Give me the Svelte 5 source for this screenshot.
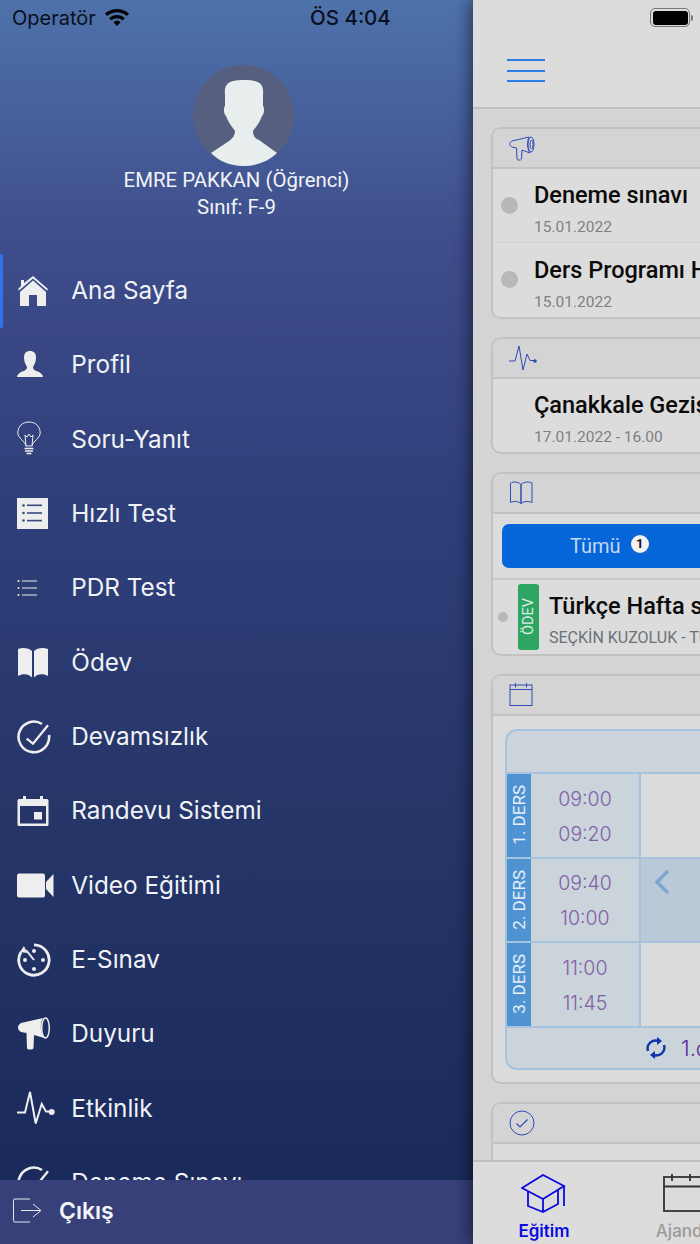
<script>
  const menu = [
    { key: 'home', label: 'Ana Sayfa', active: true },
    { key: 'user', label: 'Profil' },
    { key: 'bulb', label: 'Soru-Yanıt' },
    { key: 'list', label: 'Hızlı Test' },
    { key: 'pdr', label: 'PDR Test' },
    { key: 'book', label: 'Ödev' },
    { key: 'check', label: 'Devamsızlık' },
    { key: 'cal', label: 'Randevu Sistemi' },
    { key: 'video', label: 'Video Eğitimi' },
    { key: 'exam', label: 'E-Sınav' },
    { key: 'mega', label: 'Duyuru' },
    { key: 'pulse', label: 'Etkinlik' },
    { key: 'check', label: 'Deneme Sınavı' }
  ];
  const lessons = [
    { name: '1. DERS', a: '09:00', b: '09:20', hi: false },
    { name: '2. DERS', a: '09:40', b: '10:00', hi: true },
    { name: '3. DERS', a: '11:00', b: '11:45', hi: false }
  ];
</script>

<div class="screen">
  <aside class="side">
    <div class="status">
      <span class="op">Operatör</span>
      <svg class="wifi" width="26" height="20" viewBox="0 0 26 20">
        <path d="M1 6.500C8 .5 18 .5 25 6.500l-2.200 2.400C17 4 9 4 3.200 8.900Z" />
        <path d="M5.200 11C9.800 7 16.200 7 20.800 11l-2.200 2.400C15.200 10.500 10.800 10.500 7.400 13.400Z" />
        <path d="M9.500 15.200c2.200-1.800 4.800-1.800 7 0L13 19Z" />
      </svg>
      <span class="time">ÖS 4:04</span>
    </div>
    <div class="profile">
      <svg class="avatar" width="101" height="101" viewBox="0 0 101 101">
        <circle cx="50.500" cy="50.500" r="50.500" fill="#565f80" />
        <path d="M32 30C31 19 35 15 51 15C67 15 71 19 70 30L70 41C72 43 71 50 69 51C67 57 63 62 60 66C60 70 61 73 66 75L84 88C76 96 64 101 50 101C37 101 26 96 18 88L36 76C40 73 42 70 42 66C39 62 35 57 33 51C31 50 30 43 32 41Z" fill="#e8eded" />
      </svg>
      <div class="pname">EMRE PAKKAN (Öğrenci)</div>
      <div class="pclass">Sınıf: F-9</div>
    </div>
    <nav class="menu">
      {#each menu as m}
        <div class="item" class:active={m.active}>
          <span class="mi">
            {#if m.key === 'home'}
              <svg width="32" height="32" viewBox="0 0 32 32" fill="#eeeeee"><path d="M1 14 4 11V5H7V8L16 1 31 14 30 15.500 16 3.500 2 15.500Z" /><path d="M3 17 16 5.500 29 17V31H20V20H12V31H3Z" /></svg>
            {:else if m.key === 'user'}
              <svg width="32" height="30" viewBox="0 0 32 30" fill="#eeeeee"><path d="M7 8C7 3 9 1 13 1C17 1 19 3 19 8C19 12 17 15 16 17C16 20 19 21 22 22C24 23 26 25 26 27H0C0 25 2 23 4 22C7 21 10 20 10 17C9 15 7 12 7 8Z" /></svg>
            {:else if m.key === 'bulb'}
              <svg width="32" height="36" viewBox="0 0 32 36" fill="none" stroke="#eeeeee" stroke-width="1"><path d="M9 25C8 20 .8 17 .8 12C.8 5 6 1 12 1C18 1 23.200 5 23.200 12C23.200 17 16 20 15 25Z" /><path d="M9 25 8 14 10 16 12 13 14 16 16 14 15 25" /><path d="M7.500 27.500H16.500M8 30H16M9.500 32.500H14.500" stroke-width="1.500" /></svg>
            {:else if m.key === 'list'}
              <svg width="31" height="31" viewBox="0 0 31 31"><rect width="31" height="31" fill="#eeeeee" /><g fill="#3a4a7c"><circle cx="6.500" cy="7.500" r="1.300" /><circle cx="6.500" cy="15" r="1.300" /><circle cx="6.500" cy="22.500" r="1.300" /><rect x="10" y="6.500" width="15" height="1.600" /><rect x="10" y="14.200" width="15" height="1.600" /><rect x="10" y="21.800" width="15" height="1.600" /></g></svg>
            {:else if m.key === 'pdr'}
              <svg width="22" height="18" viewBox="0 0 22 18" fill="#eeeeee"><circle cx="1.500" cy="2" r="1" /><circle cx="1.500" cy="9" r="1" /><circle cx="1.500" cy="16" r="1" /><rect x="5" y="1.500" width="15" height="1" /><rect x="5" y="8.500" width="15" height="1" /><rect x="5" y="15.500" width="15" height="1" /></svg>
            {:else if m.key === 'book'}
              <svg width="32" height="31" viewBox="0 0 32 31" fill="#eeeeee"><path d="M15 4C12 1 6 0 1 2V29C6 26 12 27 15 30.500Z" /><path d="M17 4C20 1 26 0 31 2V29C26 26 20 27 17 30.500Z" /></svg>
            {:else if m.key === 'check'}
              <svg width="34" height="34" viewBox="0 0 34 34" fill="none" stroke="#eeeeee" stroke-width="2.600"><path d="M25 4A15.300 15.300 0 1 0 32 15" /><path d="M9.700 18.600 16 23.700 31 5.300" stroke-width="2.300" /></svg>
            {:else if m.key === 'cal'}
              <svg width="32" height="32" viewBox="0 0 32 32" fill="#eeeeee"><path d="M2 4H6V1H9V4H23V1H26V4H30A1.500 1.500 0 0 1 31.500 5.500V29.500A1.500 1.500 0 0 1 30 31H2A1.500 1.500 0 0 1 .5 29.500V5.500A1.500 1.500 0 0 1 2 4ZM3 11V28.500H29V11Z" /><rect x="17" y="17" width="8" height="7.500" /></svg>
            {:else if m.key === 'video'}
              <svg width="37" height="25" viewBox="0 0 37 25" fill="#eeeeee"><rect width="28" height="24" rx="2" y=".5" /><path d="M29 9 36.500 1V24L29 16Z" /></svg>
            {:else if m.key === 'exam'}
              <svg width="34" height="34" viewBox="0 0 34 34" fill="none" stroke="#eeeeee" stroke-width="2.800"><path d="M17 1.800A15.200 15.200 0 1 1 4 9" /><path d="M3 9 7 3 10 10Z" fill="#eeeeee" stroke="none" /><path d="M9 7 17 17" stroke-width="2" /><g fill="#eeeeee" stroke="none"><circle cx="17" cy="26" r="2" /><circle cx="26" cy="17" r="2" /><circle cx="8" cy="17" r="2" /><circle cx="17" cy="8" r="2" /></g></svg>
            {:else if m.key === 'mega'}
              <svg width="34" height="34" viewBox="0 0 34 34" fill="#eeeeee"><path d="M4 6 26 1C23 6 23 15 27 21L17 18 16.500 31C16 33 10 33 10 31L9.500 16 4 15C0 13 0 8 4 6Z" /><ellipse cx="28.500" cy="11" rx="3.800" ry="10" fill="none" stroke="#eeeeee" stroke-width="1.500" /></svg>
            {:else if m.key === 'pulse'}
              <svg width="38" height="34" viewBox="0 0 38 34" fill="none" stroke="#eeeeee" stroke-width="2"><path d="M0 21.500H8L13 1 18.700 32.500 24.700 13 29 20.500H33" /><circle cx="34.700" cy="21" r="3" fill="#eeeeee" stroke="none" /></svg>
            {/if}
          </span>
          <span class="ml">{m.label}</span>
        </div>
      {/each}
    </nav>
    <div class="logout">
      <svg width="29" height="25" viewBox="0 0 29 25" fill="none" stroke="#e8e8ee" stroke-width="1"><path d="M17 1H2A1.500 1.500 0 0 0 .5 2.500V22.500A1.500 1.500 0 0 0 2 24H17" /><path d="M8 12.500H27M20 6 28 12.500 20 19" /></svg>
      <span>Çıkış</span>
    </div>
  </aside>

  <main class="main">
    <header class="top">
      <div class="batrow">
        <span class="bat"><i></i></span><b class="nub"></b>
      </div>
      <div class="burger"><i></i><i></i><i></i></div>
    </header>

    <div class="body">
      <section class="card">
        <div class="chead">
          <svg width="26" height="26" viewBox="0 0 26 26" fill="none" stroke="#2e4ab5" stroke-width="1"><path d="M3 6 20 2C18 6 18 14 21 18L13 15 12.500 24C12 25.500 8 25.500 8 24L7.500 13 3 12C0 10 0 8 3 6Z" /><ellipse cx="22" cy="9.500" rx="3" ry="7.500" /><ellipse cx="22.500" cy="9.500" rx="1.500" ry="4.500" /></svg>
        </div>
        <div class="row">
          <span class="dot"></span>
          <div class="txt"><div class="title">Deneme sınavı</div><div class="date">15.01.2022</div></div>
        </div>
        <div class="row">
          <span class="dot"></span>
          <div class="txt"><div class="title">Ders Programı Hakkında</div><div class="date">15.01.2022</div></div>
        </div>
      </section>

      <section class="card">
        <div class="chead">
          <svg width="28" height="26" viewBox="0 0 28 26" fill="none" stroke="#2e4ab5" stroke-width="1"><path d="M0 16H6L10 1 14 25 18 9 21 15.500H25" /><circle cx="26" cy="16" r="1.800" fill="#2e4ab5" stroke="none" /></svg>
        </div>
        <div class="row event">
          <span class="dot none"></span>
          <div class="txt"><div class="title">Çanakkale Gezisi</div><div class="date">17.01.2022 - 16.00</div></div>
        </div>
      </section>

      <section class="card">
        <div class="chead">
          <svg width="25" height="24" viewBox="0 0 25 24" fill="none" stroke="#2e4ab5" stroke-width="1"><path d="M12 3.500C9 .5 4 .5 1.500 2V21.500C4 20 9 20 12 22.500ZM12 3.500C15 .5 20 .5 23 2V21.500C20 20 15 20 12 22.500Z" /></svg>
        </div>
        <div class="tabs"><div class="allbtn"><span>Tümü</span><em>1</em></div></div>
        <div class="hw">
          <span class="dot small"></span>
          <span class="tag"><span>ÖDEV</span></span>
          <div class="hwtxt"><div class="title">Türkçe Hafta sonu ödevi</div><div class="teacher">SEÇKİN KUZOLUK - TÜRKÇE</div></div>
        </div>
      </section>

      <section class="card">
        <div class="chead">
          <svg width="25" height="25" viewBox="0 0 25 25" fill="none" stroke="#2e4ab5" stroke-width="1"><rect x="1" y="3" width="22" height="20.500" /><path d="M1 7.500H23M6.500 1V5.500M17.500 1V5.500" /></svg>
        </div>
        <div class="calwrap">
          <div class="cal">
            <div class="calhead"></div>
            {#each lessons as l}
              <div class="lesson">
                <div class="lname"><span>{l.name}</span></div>
                <div class="ltime"><span>{l.a}</span><span>{l.b}</span></div>
                <div class="lcell" class:hi={l.hi}>
                  {#if l.hi}
                    <svg width="18" height="26" viewBox="0 0 18 26" fill="none" stroke="#7fa6d1" stroke-width="3.500"><path d="M15 2 4 13 15 24" /></svg>
                  {/if}
                </div>
              </div>
            {/each}
            <div class="calfoot">
              <svg width="20" height="24" viewBox="0 0 20 24" fill="none" stroke="#0f37a8" stroke-width="2.400"><path d="M2 15C0 8 6 3 13 5" /><path d="M18 9C20 16 14 21 7 19" /><path d="M11 1 16 5 11 9Z" fill="#0f37a8" stroke="none" /><path d="M9 15 4 19 9 23Z" fill="#0f37a8" stroke="none" /></svg>
              <span>1.dönem</span>
            </div>
          </div>
        </div>
      </section>

      <section class="card">
        <div class="chead">
          <svg width="26" height="26" viewBox="0 0 26 26" fill="none" stroke="#2e4ab5" stroke-width="1"><circle cx="13" cy="13" r="12" /><path d="M7.500 13.500 11 17 18.500 9.500" stroke-width="1.200" /></svg>
        </div>
        <div class="tail"></div>
      </section>
    </div>

    <footer class="tabbar">
      <div class="tab on">
        <svg width="48" height="40" viewBox="0 0 48 40" fill="none" stroke="#0a0ae0" stroke-width="1.800"><path d="M1 14 22 1 43 12 22 25Z" /><path d="M7 18V32L22 38 37 30V16M22 25V38M43 12V32" /></svg>
        <span>Eğitim</span>
      </div>
      <div class="tab">
        <svg width="48" height="40" viewBox="0 0 48 40" fill="none" stroke="#333333" stroke-width="1.800"><rect x="2" y="3" width="44" height="34" /><path d="M2 12.500H46M10 0V7M28 0V7" /></svg>
        <span>Ajanda</span>
      </div>
    </footer>
  </main>
</div>

<style>
  :global(body) { margin: 0; }
  .screen { width: 700px; height: 1244px; display: flex; overflow: hidden; font-family: Roboto, sans-serif; background: #1b2a5b; }
  .side { width: 473px; height: 1244px; flex: none; display: flex; flex-direction: column; background: linear-gradient(180deg, #4e72aa 0, #3e4d8b 240px, #2f3f7a 500px, #263669 800px, #1a2a5b 1180px); color: #f2f3f6; overflow: hidden; }
  .status { height: 36px; flex: none; position: relative; color: #0a0f1e; font-family: Inter, sans-serif; font-size: 20px; display: flex; align-items: center; padding-left: 12px; box-sizing: border-box; }
  .op { line-height: 36px; }
  .wifi { fill: #000; margin-left: 8px; margin-top: -2px; }
  .time { position: absolute; left: 310px; top: 0; line-height: 36px; font-weight: 500; font-size: 20.500px; }
  .profile { flex: none; display: flex; flex-direction: column; align-items: center; height: 217.500px; box-sizing: border-box; padding-top: 29px; }
  .avatar { display: block; margin-left: 14px; }
  .pname { font-size: 20.400px; line-height: 28px; }
  .pclass { font-size: 20.400px; line-height: 26px; }
  .menu { flex: 1; overflow: hidden; min-height: 0; }
  .item { height: 74.330px; display: flex; align-items: center; padding-left: 16.500px; box-sizing: border-box; position: relative; }
  .item.active::before { content: ''; position: absolute; left: 0; top: 0; bottom: 0; width: 3px; background: #2e74ee; border-radius: 2px; }
  .mi { width: 54.800px; flex: none; display: flex; align-items: center; }
  .ml { font-family: Inter, sans-serif; font-size: 24.300px; color: #f1f2f6; margin-top: -1px; }
  .logout { height: 64px; flex: none; background: #374079; display: flex; align-items: center; padding: 0 0 3px 13px; box-sizing: border-box; gap: 17px; font-family: Inter, sans-serif; font-size: 23px; font-weight: 600; color: #f4f5f9; }

  .main { width: 227px; height: 1244px; flex: none; display: flex; flex-direction: column; background: #d4d4d4; box-shadow: -4px 0 14px rgba(0, 0, 0, .45); position: relative; }
  .top { height: 109px; flex: none; background: #dcdcdc; border-bottom: 2px solid #c0c0c0; box-sizing: border-box; position: relative; }
  .batrow { position: absolute; left: 177px; top: 8px; display: flex; align-items: center; }
  .bat { width: 40px; height: 19px; box-sizing: border-box; border: 1.500px solid #777; border-radius: 5px; padding: 1.500px; display: block; }
  .bat i { display: block; height: 100%; background: #000; border-radius: 3px; }
  .nub { width: 2px; height: 6px; background: #777; margin-left: 1px; border-radius: 0 2px 2px 0; }
  .burger { position: absolute; left: 34px; top: 59px; width: 38px; display: flex; flex-direction: column; gap: 8.500px; }
  .burger i { display: block; height: 2px; background: #2b7de3; }
  .body { flex: 1; min-height: 0; overflow: hidden; padding: 17.500px 0 0 18px; display: flex; flex-direction: column; gap: 18px; }
  .card { width: 500px; flex: none; box-sizing: border-box; border: 2px solid #c2c2c2; border-radius: 10px; background: #dcdcdc; overflow: hidden; }
  .chead { height: 38px; background: #d4d4d4; border-bottom: 2px solid #c2c2c2; display: flex; align-items: center; padding-left: 16px; }
  .row { height: 73px; display: flex; align-items: center; border-bottom: 1px solid #cfcfcf; padding-left: 8px; }
  .row:last-child { border-bottom: 0; height: 74px; }
  .row.event { height: 73px; }
  .txt { padding-top: 8px; }
  .dot { width: 17px; height: 17px; border-radius: 50%; background: #b8b8b8; flex: none; margin-right: 16px; }
  .dot.none { background: none; }
  .dot.small { width: 10px; height: 10px; margin: 0 10px 0 5px; }
  .title { font-size: 23.500px; font-weight: 500; line-height: 32px; color: #0b0b0b; white-space: nowrap; }
  .date { font-size: 15.500px; line-height: 24px; color: #808080; margin-top: 4px; white-space: nowrap; }
  .tabs { height: 66px; padding: 10px 0 0 9px; border-bottom: 2px solid #c9c9c9; box-sizing: border-box; }
  .allbtn { width: 480px; height: 44.500px; background: #0466d9; border-radius: 7px; display: flex; align-items: center; color: #c6d8ef; font-size: 20px; padding-left: 68px; box-sizing: border-box; gap: 10px; }
  .allbtn em { width: 18px; height: 18px; border-radius: 50%; background: #f2f2f2; color: #111; font-style: normal; font-size: 13px; font-weight: 700; display: flex; align-items: center; justify-content: center; margin-top: -4px; }
  .hw { height: 74px; display: flex; align-items: center; }
  .tag { width: 20.500px; height: 66px; background: #2fa564; border-radius: 3px; flex: none; display: flex; align-items: center; justify-content: center; margin-right: 10.500px; color: #dcefe3; }
  .tag span { writing-mode: vertical-rl; transform: rotate(180deg); font-size: 14.500px; }
  .hwtxt { padding-top: 7px; }
  .teacher { font-size: 16px; line-height: 22px; color: #6a7178; margin-top: 6.700px; white-space: nowrap; }
  .hw .title { line-height: 30px; }
  .calwrap { padding: 13px 0 12.500px 12px; }
  .cal { width: 480px; border: 2px solid #a5c2de; border-radius: 12px; background: #cbd3db; overflow: hidden; box-sizing: border-box; }
  .calhead { height: 41.500px; border-bottom: 2px solid #a5c2de; }
  .lesson { height: 82.500px; display: flex; border-bottom: 2px solid #a5c2de; }
  .lname { width: 24px; background: #4f93d2; color: #e6eff8; display: flex; align-items: center; justify-content: center; flex: none; }
  .lname span { writing-mode: vertical-rl; transform: rotate(180deg); font-size: 17px; white-space: nowrap; }
  .ltime { width: 108px; flex: none; display: flex; flex-direction: column; align-items: center; justify-content: center; gap: 11px; padding-top: 2px; box-sizing: border-box; color: #8061a8; font-family: Inter, sans-serif; font-size: 19.500px; line-height: 24px; font-weight: 300; border-right: 2px solid #a5c2de; width: 110px; }
  .lcell { flex: 1; background: #dcdcdc; }
  .lcell.hi { background: #b9c9d8; padding: 10px 0 0 12px; box-sizing: border-box; }
  .calfoot { height: 40px; display: flex; align-items: center; padding-left: 139px; gap: 15px; color: #5b2d9c; font-size: 22px; font-weight: 300; font-family: Inter, sans-serif; }
  .tail { height: 80px; }

  .tabbar { height: 84px; flex: none; background: #dcdcdc; border-top: 2px solid #bfbfbf; box-sizing: border-box; display: flex; position: relative; }
  .tab { width: 142px; flex: none; display: flex; flex-direction: column; align-items: center; padding-top: 12px; box-sizing: border-box; font-family: Inter, sans-serif; font-size: 17px; font-weight: 500; color: #9a9a9a; white-space: nowrap; }
  .tab span { line-height: 22px; margin-top: 6px; }
  .tab:not(.on) span { margin-left: -4px; }
  .tab.on { color: #0a0ae0; font-weight: 600; }
  .tab.on svg { margin-left: 2px; }
</style>
